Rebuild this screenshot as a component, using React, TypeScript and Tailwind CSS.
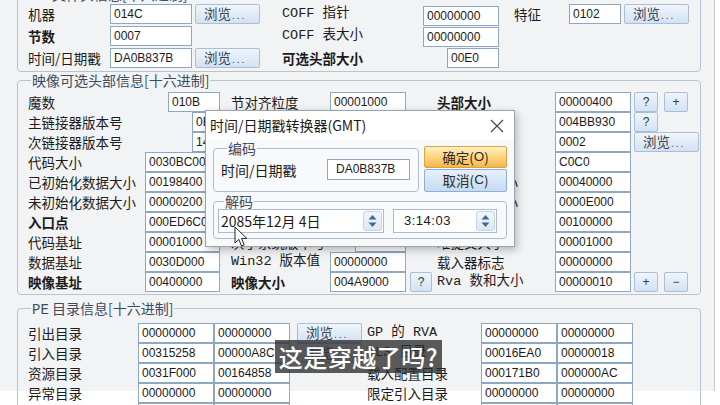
import React from 'react';

const BASE = "text-[13.5px] leading-[20px] text-[#1c1c1c] whitespace-nowrap overflow-hidden shrink-0";
const SANS = "font-['Noto_Sans_CJK_SC',sans-serif]";
const MONO = "font-['Liberation_Mono','Noto_Sans_CJK_SC',monospace]";
const LBL = `${BASE} ${SANS}`;
const MLBL = `${BASE} ${MONO}`;

function Field({ v, w, className = '' }: { v: string; w: string; className?: string }) {
  return (
    <div
      className={`${w} h-[20px] shrink-0 border border-[#8ea7c2] bg-white pl-[3px] text-[12px] leading-[18px] font-['Liberation_Sans',sans-serif] text-[#1a1a1a] whitespace-nowrap overflow-hidden ${className}`}
    >
      {v}
    </div>
  );
}

function Btn({ children, w, className = '' }: { children: React.ReactNode; w: string; className?: string }) {
  return (
    <div
      className={`${w} h-[20px] shrink-0 rounded-[2px] border border-[#a9bfd8] bg-linear-to-b from-[#f0f5fb] to-[#d3e2f3] text-[#2a3440] flex items-center ${className}`}
    >
      {children}
    </div>
  );
}

function Browse({ w = 'w-[65px]', className = '' }: { w?: string; className?: string }) {
  return (
    <Btn w={w} className={className}>
      <span className="pl-[8px] font-['Noto_Sans_CJK_SC',sans-serif] text-[13.5px] leading-[18px] text-[#3a4552]">
        浏览<span className="ml-[1px] text-[10px] tracking-[2px] text-[#555]">...</span>
      </span>
    </Btn>
  );
}

function Small({ t, w = 'w-[24px]', className = '' }: { t: string; w?: string; className?: string }) {
  return (
    <Btn w={w} className={`justify-center ${className}`}>
      <span className="font-['Liberation_Sans',sans-serif] text-[12px] leading-[18px] text-[#2b3a4a]">{t}</span>
    </Btn>
  );
}

type C1 = { l: string; v: string; w?: string; b?: boolean };
const col1: C1[] = [
  { l: '魔数', v: '010B', w: 'w-[52px]' },
  { l: '主链接器版本号', v: '0E', w: 'w-[28px]' },
  { l: '次链接器版本号', v: '14', w: 'w-[28px]' },
  { l: '代码大小', v: '0030BC00' },
  { l: '已初始化数据大小', v: '00198400' },
  { l: '未初始化数据大小', v: '00000200' },
  { l: '入口点', v: '000ED6C0', b: true },
  { l: '代码基址', v: '00001000' },
  { l: '数据基址', v: '0030D000' },
  { l: '映像基址', v: '00400000', b: true },
];
type C2 = { l: string; v: string; short?: boolean; b?: boolean; mono?: boolean; q?: boolean };
const col2: C2[] = [
  { l: '节对齐粒度', v: '00001000' },
  { l: '文件对齐粒度', v: '00000200' },
  { l: '主操作系统版本号', v: '0006', short: true },
  { l: '次操作系统版本号', v: '0000', short: true },
  { l: '主映像版本号', v: '0000', short: true },
  { l: '次映像版本号', v: '0000', short: true },
  { l: '主子系统版本号', v: '0006', short: true },
  { l: '次子系统版本号', v: '0000', short: true },
  { l: 'Win32 版本值', v: '00000000', mono: true },
  { l: '映像大小', v: '004A9000', b: true, q: true },
];
type C3 = { l: string; v: string; b?: boolean; mono?: boolean; btn?: 'qp' | 'q' | 'browse' | 'pm' };
const col3: C3[] = [
  { l: '头部大小', v: '00000400', b: true, btn: 'qp' },
  { l: '校验和', v: '004BB930', btn: 'q' },
  { l: '子系统', v: '0002', btn: 'browse' },
  { l: 'DLL 特征', v: 'C0C0' },
  { l: '堆栈保留大小', v: '00040000' },
  { l: '堆栈提交大小', v: '0000E000' },
  { l: '堆保留大小', v: '00100000' },
  { l: '堆提交大小', v: '00001000' },
  { l: '载入器标志', v: '00000000' },
  { l: 'Rva 数和大小', v: '00000010', mono: true, btn: 'pm' },
];

type D = { l: string; a: string; b: string; browse?: boolean; r: string; rmono?: boolean; c: string; d: string };
const dirs: D[] = [
  { l: '引出目录', a: '00000000', b: '00000000', browse: true, r: 'GP 的 RVA', rmono: true, c: '00000000', d: '00000000' },
  { l: '引入目录', a: '00315258', b: '00000A8C', browse: true, r: 'TLS 目录', rmono: true, c: '00016EA0', d: '00000018' },
  { l: '资源目录', a: '0031F000', b: '00164858', r: '载入配置目录', c: '000171B0', d: '000000AC' },
  { l: '异常目录', a: '00000000', b: '00000000', r: '限定引入目录', c: '00000000', d: '00000000' },
  { l: '安全目录', a: '00000000', b: '00000000', r: '引入地址表', c: '002D9000', d: '00000A70' },
];

function SpinArrows() {
  return (
    <div className="w-[19px] h-[20px] rounded-[3px] border border-[#c3d3e4] bg-linear-to-b from-[#f2f6fb] to-[#dce7f4] flex items-center justify-center">
      <svg width="11" height="16" viewBox="0 0 11 16">
        <path d="M5.5 2 L9.5 6.5 L1.5 6.5 Z" fill="#3d6a9c" />
        <path d="M5.5 14 L9.5 9.5 L1.5 9.5 Z" fill="#3d6a9c" />
      </svg>
    </div>
  );
}

export default function App() {
  return (
    <div className="relative w-[720px] h-[405px] overflow-hidden bg-white">
      <div className="w-[715px] h-[405px] bg-[#f2f3f4] border-r border-[#c6c9cc] pl-[17px]">
        {/* Group 1 */}
        <fieldset className="w-[684px] -mt-[14px] rounded-[4px] border border-[#b9c3ce] pl-[10px] pr-0 pt-[2px] pb-[3px]">
          <legend className="ml-[3px] px-[1px] h-[16px] font-['Noto_Sans_CJK_SC',sans-serif] text-[14px] leading-[16px] text-[#3b4c63]">
            <span className={MONO}>PE</span> 文件头信息[十六进制]
          </legend>
          <div className="flex flex-col gap-[2px]">
            <div className="flex items-center h-[20px]">
              <div className={`${LBL} w-[82px]`}>机器</div>
              <Field v="014C" w="w-[82px]" />
              <Browse className="ml-[3px]" />
              <div className={`${MLBL} w-[141px] ml-[22px]`}>COFF 指针</div>
              <Field v="00000000" w="w-[76px]" className="translate-y-[2px]" />
              <div className={`${LBL} w-[55px] ml-[15px]`}>特征</div>
              <Field v="0102" w="w-[52px]" />
              <Browse className="ml-[3px]" />
            </div>
            <div className="flex items-center h-[20px]">
              <div className={`${LBL} w-[82px] font-bold`}>节数</div>
              <Field v="0007" w="w-[82px]" />
              <div className={`${MLBL} w-[141px] ml-[90px]`}>COFF 表大小</div>
              <Field v="00000000" w="w-[76px]" className="translate-y-[1px]" />
            </div>
            <div className="flex items-center h-[20px]">
              <div className={`${LBL} w-[82px]`}>时间/日期戳</div>
              <Field v="DA0B837B" w="w-[82px]" />
              <Browse className="ml-[3px]" />
              <div className={`${LBL} w-[165px] ml-[22px] font-bold`}>可选头部大小</div>
              <Field v="00E0" w="w-[52px]" />
            </div>
          </div>
        </fieldset>

        {/* Group 2 */}
        <fieldset className="w-[684px] mt-[0px] rounded-[4px] border border-[#b9c3ce] pl-[10px] pr-0 pt-[4px] pb-[2px]">
          <legend className="ml-[3px] px-[1px] h-[16px] font-['Noto_Sans_CJK_SC',sans-serif] text-[14px] leading-[16px] text-[#3b4c63]">
            映像可选头部信息[十六进制]
          </legend>
          <div className="flex flex-col">
            {col1.map((c, i) => {
              const c2 = col2[i];
              const c3 = col3[i];
              return (
                <div key={i} className="flex items-center h-[20px]">
                  <div className={`${LBL} w-[117px] ${c.b ? 'font-bold' : ''}`}>{c.l}</div>
                  <div className="w-[75px] flex justify-end shrink-0">
                    <Field v={c.v} w={c.w ?? 'w-[75px]'} />
                  </div>
                  <div className={`${c2.mono ? MLBL : LBL} w-[99px] ml-[11px] ${c2.b ? 'font-bold' : ''}`}>{c2.l}</div>
                  <div className="w-[76px] flex justify-end shrink-0">
                    <Field v={c2.v} w={c2.short ? 'w-[51px]' : 'w-[76px]'} />
                  </div>
                  <div className="w-[22px] ml-[4px] shrink-0">{c2.q ? <Small t="?" w="w-[22px]" /> : null}</div>
                  <div className={`${c3.mono ? MLBL : LBL} w-[118px] ml-[5px] ${c3.b ? 'font-bold' : ''}`}>{c3.l}</div>
                  <Field v={c3.v} w="w-[76px]" />
                  {c3.btn === 'qp' && (
                    <>
                      <Small t="?" className="ml-[3px]" />
                      <Small t="+" className="ml-[6px]" />
                    </>
                  )}
                  {c3.btn === 'q' && <Small t="?" className="ml-[3px]" />}
                  {c3.btn === 'browse' && <Browse className="ml-[3px]" />}
                  {c3.btn === 'pm' && (
                    <>
                      <Small t="+" className="ml-[3px]" />
                      <Small t="−" className="ml-[6px]" />
                    </>
                  )}
                </div>
              );
            })}
          </div>
        </fieldset>

        {/* Group 3 */}
        <fieldset className="w-[684px] mt-[5px] rounded-[4px] border border-[#b9c3ce] pl-[10px] pr-0 pt-[7px] pb-[4px]">
          <legend className="ml-[3px] px-[1px] h-[16px] font-['Noto_Sans_CJK_SC',sans-serif] text-[14px] leading-[16px] text-[#3b4c63]">
            <span className={MONO}>PE</span> 目录信息[十六进制]
          </legend>
          <div className="flex flex-col">
            {dirs.map((d, i) => (
              <div key={i} className="flex items-center h-[20px]">
                <div className={`${LBL} w-[110px]`}>{d.l}</div>
                <Field v={d.a} w="w-[76px]" />
                <Field v={d.b} w="w-[76px]" />
                <div className="w-[65px] ml-[7px] shrink-0">{d.browse ? <Browse /> : null}</div>
                <div className={`${d.rmono ? MLBL : LBL} w-[114px] ml-[5px]`}>{d.r}</div>
                <Field v={d.c} w="w-[76px]" />
                <Field v={d.d} w="w-[76px]" />
              </div>
            ))}
          </div>
        </fieldset>
      </div>

      {/* Dialog */}
      <div className="absolute left-[205px] top-[110px] w-[310px] h-[137px] bg-[#f8f9fa] border border-[#9aa4ae] shadow-[2px_3px_8px_rgba(0,0,0,0.25)] z-10">
        <div className="h-[29px] bg-white flex items-center justify-between pl-[4px] pr-[10px]">
          <span className="font-['Noto_Sans_CJK_SC',sans-serif] text-[14px] text-[#1a1a1a]">时间/日期戳转换器(GMT)</span>
          <svg width="14" height="14" viewBox="0 0 14 14">
            <path d="M1 1 L13 13 M13 1 L1 13" stroke="#444" strokeWidth="1.1" />
          </svg>
        </div>
        <div className="px-[7px]">
          <div className="flex">
            <fieldset className="w-[210px] rounded-[4px] border border-[#aebccb] pl-[7px] pr-[8px] pt-[3px] pb-[8px]">
              <legend className="ml-[6px] px-[1px] h-[16px] font-['Noto_Sans_CJK_SC',sans-serif] text-[14px] leading-[16px] text-[#3b4c63]">编码</legend>
              <div className="flex items-center justify-between">
                <span className={`${LBL} text-[14px]`}>时间/日期戳</span>
                <div className="w-[83px] h-[21px] border border-[#8ea7c2] bg-white pl-[8px] text-[12px] leading-[19px] font-['Liberation_Sans',sans-serif] text-[#1a1a1a]">
                  DA0B837B
                </div>
              </div>
            </fieldset>
            <div className="ml-[5px] mt-[6px] flex flex-col gap-[1px]">
              <div className="w-[83px] h-[22px] rounded-[2px] border border-[#d9a33f] bg-linear-to-b from-[#fff0c4] via-[#fdd67e] to-[#f5b84a] flex items-center justify-center font-['Noto_Sans_CJK_SC',sans-serif] text-[13.5px] text-[#2a2a2a]">
                确定(<span className="font-['Liberation_Sans',sans-serif]">O</span>)
              </div>
              <div className="w-[83px] h-[23px] rounded-[2px] border border-[#8fb0d4] bg-linear-to-b from-[#e6f0fb] to-[#c6daf1] flex items-center justify-center font-['Noto_Sans_CJK_SC',sans-serif] text-[13.5px] text-[#2a2a2a]">
                取消(<span className="font-['Liberation_Sans',sans-serif]">C</span>)
              </div>
            </div>
          </div>
          <fieldset className="w-[294px] mt-[1px] rounded-[4px] border border-[#aebccb] pl-[4px] pr-[9px] pt-[0px] pb-[5px]">
            <legend className="ml-[6px] px-[1px] h-[16px] font-['Noto_Sans_CJK_SC',sans-serif] text-[14px] leading-[16px] text-[#3b4c63]">解码</legend>
            <div className="flex items-center">
              <div className="w-[166px] h-[24px] border border-[#a9bccf] bg-white flex items-center justify-between pl-[2px] pr-[1px]">
                <span className="font-['Noto_Sans_CJK_SC',sans-serif] text-[14px] text-[#1a1a1a] leading-[20px]">2085年12月 4日</span>
                <SpinArrows />
              </div>
              <div className="ml-[9px] w-[104px] h-[24px] border border-[#a9bccf] bg-white flex items-center justify-between pl-[10px] pr-[1px]">
                <span className="font-['Liberation_Sans',sans-serif] text-[13px] tracking-[0.5px] text-[#1a1a1a]">3:14:03</span>
                <SpinArrows />
              </div>
            </div>
          </fieldset>
        </div>
      </div>

      {/* Cursor */}
      <svg className="absolute left-[234px] top-[226px] z-20" width="15" height="22" viewBox="0 0 15 22">
        <path d="M1 1 L1 17 L4.8 13.4 L7.6 20 L10.2 18.9 L7.5 12.4 L12.8 12.4 Z" fill="white" stroke="#222" strokeWidth="1" strokeLinejoin="round" />
      </svg>

      {/* Subtitle */}
      <div className="absolute left-[275px] top-[340px] w-[167px] h-[33px] bg-[rgba(45,45,45,0.78)] z-30 flex items-center justify-center">
        <span className="font-['Noto_Sans_CJK_SC',sans-serif] text-[24px] font-medium leading-[30px] text-white tracking-[0.5px]">这是穿越了吗?</span>
      </div>
    </div>
  );
}
